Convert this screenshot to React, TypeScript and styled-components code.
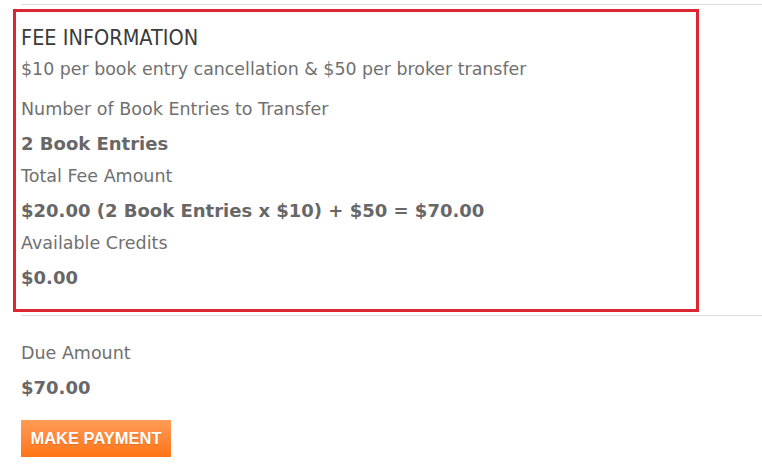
import React from "react";
import styled, { createGlobalStyle } from "styled-components";

const GlobalStyle = createGlobalStyle`
  html, body {
    margin: 0;
    padding: 0;
    background: #ffffff;
  }
  body {
    font-family: "DejaVu Sans", Tahoma, sans-serif;
    color: #6f6f6f;
  }
`;

const Page = styled.div`
  width: 762px;
  padding: 4px 0 0 21px;
  box-sizing: border-box;
`;

const Rule = styled.div<{ $gap?: number }>`
  height: 1px;
  background: #e0e0e0;
  margin-top: ${(p) => p.$gap ?? 0}px;
`;

const FeeBox = styled.section`
  box-sizing: border-box;
  width: 686px;
  height: 303px;
  margin: 4px 0 0 -8px;
  padding: 10px 5px 0;
  border: 3px solid #dc2631;
`;

const Title = styled.h3`
  margin: 0;
  font-family: "DejaVu Sans Condensed", "DejaVu Sans", sans-serif;
  font-size: 21.5px;
  font-weight: normal;
  line-height: 32px;
  color: #3a3a3a;
`;

const Note = styled.p`
  margin: -1px 0 7px;
  font-size: 17.4px;
  line-height: 33px;
  color: #707070;
`;

const Label = styled.div`
  font-size: 17.5px;
  line-height: 33.6px;
  color: #707070;
`;

const Value = styled.div`
  font-size: 18px;
  line-height: 33.6px;
  font-weight: bold;
  color: #676767;
`;

const DueSection = styled.section`
  padding-top: 21px;
`;

const PayButton = styled.button`
  display: block;
  margin-top: 16px;
  width: 150px;
  height: 37px;
  padding: 0;
  border: none;
  background: linear-gradient(to bottom, #ff9d55 0%, #ff8838 50%, #ff7414 100%);
  color: #ffffff;
  font-family: "Liberation Sans", Arial, sans-serif;
  font-weight: bold;
  font-size: 16.5px;
  text-shadow: 0 1px 1px rgba(160, 70, 0, 0.35);
  cursor: pointer;
`;

const App: React.FC = () => {
  return (
    <>
      <GlobalStyle />
      <Page>
        <Rule />
        <FeeBox>
          <Title>FEE INFORMATION</Title>
          <Note>$10 per book entry cancellation &amp; $50 per broker transfer</Note>
          <Label>Number of Book Entries to Transfer</Label>
          <Value>2 Book Entries</Value>
          <Label>Total Fee Amount</Label>
          <Value>$20.00 (2 Book Entries x $10) + $50 = $70.00</Value>
          <Label>Available Credits</Label>
          <Value>$0.00</Value>
        </FeeBox>
        <Rule $gap={3} />
        <DueSection>
          <Label>Due Amount</Label>
          <Value>$70.00</Value>
          <PayButton type="button">MAKE PAYMENT</PayButton>
        </DueSection>
      </Page>
    </>
  );
};

export default App;
